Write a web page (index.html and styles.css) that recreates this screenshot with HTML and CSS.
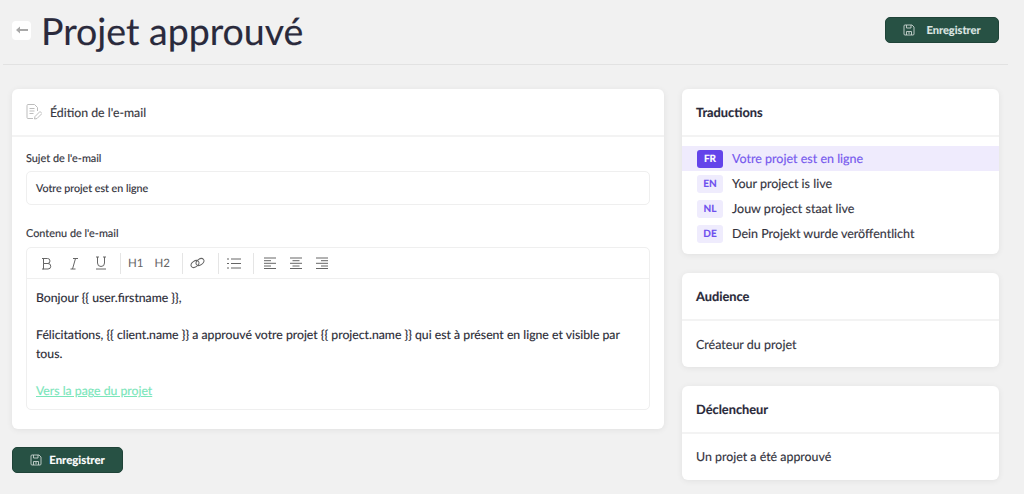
FILE: index.html
```html
<!DOCTYPE html>
<html lang="fr">
<head>
<meta charset="utf-8">
<title>Projet approuvé</title>
<link rel="stylesheet" href="styles.css">
</head>
<body>
<svg class="sprite" width="0" height="0">
  <symbol id="save" viewBox="0 0 12 12"><path d="M2 1h7l2 2v7a1 1 0 0 1-1 1H2a1 1 0 0 1-1-1V2a1 1 0 0 1 1-1zM3.500 1v3h4.500V1M3.500 11V7.500h5V11M5 9h2" fill="none" stroke="currentColor" stroke-width=".9"/></symbol>
</svg>
<div class="page">
  <header class="header">
    <div class="title-group">
      <button class="back" aria-label="Retour"><svg width="12" height="8" viewBox="0 0 12 8"><path d="M0 4l4-3.500V3h8v2H4v2.500z" fill="#a8a8a8"/></svg></button>
      <h1>Projet approuvé</h1>
    </div>
    <button class="btn btn-top"><svg class="save"><use href="#save"/></svg>Enregistrer</button>
  </header>
  <main class="columns">
    <div class="left">
      <section class="card editor-card">
        <div class="card-head edit-head">
          <svg class="edit-icon" width="16" height="16" viewBox="0 0 16 16" fill="none" stroke="#bdbdbd" stroke-width="1"><path d="M7 14.500H2a1 1 0 0 1-1-1v-12a1 1 0 0 1 1-1h6.500l3 3V7M3.500 4.500h5M3.500 7h5M3.500 9.500h4M8.500 15l.5-2.500 5-5 2 2-5 5z"/></svg>
          <span>Édition de l'e-mail</span>
        </div>
        <div class="card-body">
          <label class="label">Sujet de l'e-mail</label>
          <div class="input">Votre projet est en ligne</div>
          <label class="label label-second">Contenu de l'e-mail</label>
          <div class="rich">
            <div class="toolbar">
              <div class="tool-group g1">
                <svg width="12" height="13" viewBox="0 0 12 13" fill="none" stroke="#666" stroke-width="1"><path d="M2.500 1.500h4a2.500 2.500 0 0 1 0 5h-4zM2.500 6.500h4.500a2.700 2.700 0 0 1 0 5.500h-4.500zM1 1.500h2M1 12h2"/></svg>
                <svg width="10" height="13" viewBox="0 0 10 13" fill="none" stroke="#666" stroke-width="1"><path d="M4 1.500h5M1.500 12h5M6.500 1.500l-3 10.500"/></svg>
                <svg width="12" height="14" viewBox="0 0 12 14" fill="none" stroke="#666" stroke-width="1"><path d="M2.500 1v6a3.500 3.500 0 0 0 7 0V1M1 1h3M8 1h3M1 13h10"/></svg>
              </div>
              <div class="tool-group g2"><span>H1</span><span>H2</span></div>
              <div class="tool-group g3">
                <svg width="15" height="12" viewBox="0 0 15 12" fill="none" stroke="#666" stroke-width="1"><ellipse cx="5" cy="7" rx="4.300" ry="2.900" transform="rotate(-35 5 7)"/><ellipse cx="10" cy="5" rx="4.300" ry="2.900" transform="rotate(-35 10 5)"/></svg>
              </div>
              <div class="tool-group g4">
                <svg width="14" height="11" viewBox="0 0 14 11" fill="none" stroke="#666" stroke-width="1"><path d="M4 1h10M4 5.500h10M4 10h10M0 1h2M0 5.500h2M0 10h2" /></svg>
              </div>
              <div class="tool-group g5">
                <svg width="12" height="12" viewBox="0 0 12 12" stroke="#666" stroke-width="1"><path d="M0 1h12M0 3.700h7M0 6.300h12M0 9h7M0 11.500h12"/></svg>
                <svg width="12" height="12" viewBox="0 0 12 12" stroke="#666" stroke-width="1"><path d="M0 1h12M2.500 3.700h7M0 6.300h12M2.500 9h7M0 11.500h12"/></svg>
                <svg width="12" height="12" viewBox="0 0 12 12" stroke="#666" stroke-width="1"><path d="M0 1h12M5 3.700h7M0 6.300h12M5 9h7M0 11.500h12"/></svg>
              </div>
            </div>
            <div class="content">
              <p>Bonjour {{ user.firstname }},</p>
              <p>Félicitations, {{ client.name }} a approuvé votre projet {{ project.name }} qui est à présent en ligne et visible par tous.</p>
              <p><a href="#">Vers la page du projet</a></p>
            </div>
          </div>
        </div>
      </section>
      <button class="btn btn-bottom"><svg class="save"><use href="#save"/></svg>Enregistrer</button>
    </div>
    <aside class="right">
      <section class="card">
        <div class="card-head side-head">Traductions</div>
        <ul class="langs">
          <li class="lang active"><span class="badge">FR</span>Votre projet est en ligne</li>
          <li class="lang"><span class="badge">EN</span>Your project is live</li>
          <li class="lang"><span class="badge">NL</span>Jouw project staat live</li>
          <li class="lang"><span class="badge">DE</span>Dein Projekt wurde veröffentlicht</li>
        </ul>
      </section>
      <section class="card">
        <div class="card-head side-head">Audience</div>
        <div class="side-body">Créateur du projet</div>
      </section>
      <section class="card">
        <div class="card-head side-head">Déclencheur</div>
        <div class="side-body side-body-last">Un projet a été approuvé</div>
      </section>
    </aside>
  </main>
</div>
</body>
</html>
```
FILE: styles.css
```css
* { box-sizing: border-box; }
html, body { margin: 0; height: 100%; }
body {
  background: #f1f1f1;
  font-family: "Lato", "Liberation Sans", sans-serif;
  color: #2b2b3a;
  overflow: hidden;
  text-rendering: geometricPrecision;
  -webkit-text-stroke: .15px;
}
.sprite { display: block; height: 0; }
.page { width: 1024px; height: 494px; padding: 0 25px 0 3px; }
.header {
  height: 65px;
  border-bottom: 1px solid #e2e2e2;
  display: flex;
  align-items: center;
  justify-content: space-between;
  padding: 0 9px 4px 9px;
  margin-right: -9px;
}
.title-group { display: flex; align-items: center; gap: 10px; }
.back {
  width: 19px; height: 19px;
  border: 0; border-radius: 4px;
  background: #fff;
  display: flex; align-items: center; justify-content: center;
  padding: 0;
}
h1 {
  margin: 0;
  font-size: 37.500px;
  font-weight: 400;
  color: #2a2a3c;
  line-height: 1.2;
}
.btn {
  display: flex; align-items: center; justify-content: center;
  background: #275144;
  color: #fff;
  border: 1px solid #1f4338;
  border-radius: 5px;
  font: 700 11.400px "Lato", sans-serif;
  height: 26px;
  padding: 0;
  text-rendering: geometricPrecision;
}
.btn-top { width: 114px; gap: 11px; color: #dfe7e4; font-size: 11.100px; }
.btn-bottom { width: 111px; gap: 7px; margin-top: 18px; }
.save { width: 12px; height: 12px; color: #c9d5d0; }
.columns { display: flex; gap: 18px; margin-top: 24px; padding-left: 9px; }
.left { width: 652px; }
.right { width: 317px; display: flex; flex-direction: column; gap: 19px; }
.card {
  background: #fff;
  border-radius: 6px;
  box-shadow: 0 1px 6px rgba(0, 0, 0, .07);
}
.editor-card { height: 340px; }
.card-head { border-bottom: 2px solid #f3f3f3; display: flex; align-items: center; }
.edit-head {
  height: 48px;
  padding-left: 14px;
  gap: 8px;
  font-size: 12.300px;
  color: #38383f;
}
.card-body { padding: 15px 14px 0; }
.label { display: block; font-size: 10.900px; color: #33333c; line-height: 14px; }
.input {
  margin-top: 5px;
  height: 34px;
  border: 1px solid #efefef;
  border-radius: 5px;
  padding-left: 9px;
  display: flex; align-items: center;
  font-size: 10.700px;
  color: #2e2e38;
}
.label-second { margin-top: 22px; }
.rich {
  margin-top: 6px;
  height: 163px;
  border: 1px solid #efefef;
  border-radius: 5px;
}
.toolbar {
  height: 31px;
  border-bottom: 1px solid #efefef;
  display: flex;
  align-items: center;
}
.tool-group {
  height: 21px;
  display: flex;
  align-items: center;
  border-right: 1px solid #e5e5e5;
  color: #666;
  font-size: 11.500px;
  -webkit-text-stroke: 0;
}
.tool-group:last-child { border-right: 0; }
.g1 { width: 94px; padding-left: 14px; gap: 16px; }
.g2 { width: 62px; padding-left: 7px; gap: 11px; }
.g3 { width: 36px; padding-left: 7px; }
.g4 { width: 35px; padding-left: 8px; }
.g5 { padding-left: 10px; gap: 14px; }
.content { padding: 9px 10px 0 9px; font-size: 12.250px; line-height: 19px; color: #2b2b36; }
.content p { margin: 0 0 18px; }
.content a { color: #7ae6ba; text-decoration: underline; }
.side-head {
  height: 48px;
  padding-left: 14px;
  font-size: 12.800px;
  font-weight: 700;
  color: #2a2a3a;
}
.langs { list-style: none; margin: 0; padding: 9px 0 8px; }
.lang {
  display: flex; align-items: center;
  height: 25px;
  padding-left: 15px;
  gap: 9px;
  font-size: 12.500px;
  color: #33333e;
}
.badge {
  width: 26px; height: 18px;
  border-radius: 3px;
  background: #efecfd;
  color: #6d4fee;
  font-size: 10px;
  font-weight: 700;
  display: flex; align-items: center; justify-content: center;
}
.active { background: #efebfd; color: #7558ee; }
.active .badge { background: #6344ea; color: #fff; }
.side-body { height: 46px; padding-left: 14px; display: flex; align-items: center; font-size: 12.500px; color: #33333e; }
.side-body-last { font-size: 12.400px; padding-bottom: 1px; }
```
